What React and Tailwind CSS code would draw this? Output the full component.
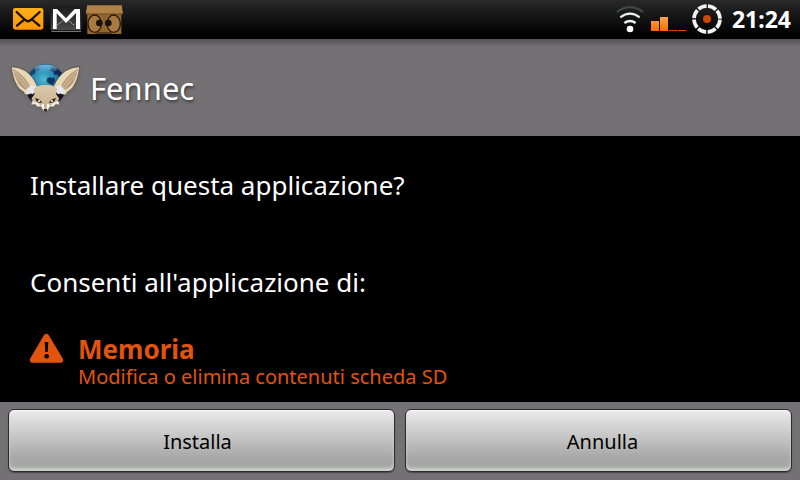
import React from 'react';

function MailIcon() {
    return (
        <svg viewBox="36 21 96 72" className="w-8 h-6" aria-hidden="true">
            <defs>
                <linearGradient id="mail" x1="0" y1="0" x2="0" y2="1">
                    <stop offset="0" stopColor="#ffae1c" />
                    <stop offset="1" stopColor="#ff9600" />
                </linearGradient>
            </defs>
            <rect x="39" y="24" width="91" height="65" rx="7" fill="url(#mail)" />
            <path d="M50 36L74 59Q84 68 94 59L119 36M51 77L69 62M118 77L100 62" fill="none" stroke="#1a1206" strokeWidth="7" strokeLinecap="round" />
        </svg>
    );
}

function GmailIcon() {
    return (
        <svg viewBox="150 18 96 84" className="w-8 h-7" aria-hidden="true">
            <defs>
                <linearGradient id="gmail" x1="0" y1="0" x2="0" y2="1">
                    <stop offset="0" stopColor="#1c1c1c" />
                    <stop offset="1" stopColor="#4a4a4a" />
                </linearGradient>
            </defs>
            <rect x="152" y="25" width="92" height="68" rx="3" fill="url(#gmail)" />
            <path d="M172 78L188 66M222 78L207 66" stroke="#c8c8c8" strokeWidth="3" strokeDasharray="5 3" />
            <path d="M154 97H243" stroke="#8a8a8a" strokeWidth="3" />
            <path d="M159 90V30H171L198 58L224 30H240V90H228V42L198 72L170 43V90Z" fill="#fff" />
        </svg>
    );
}

function BoxIcon() {
    return (
        <svg viewBox="258 9 114 96" className="w-[38px] h-8" aria-hidden="true">
            <rect x="262" y="34" width="102" height="68" fill="#94672f" />
            <path d="M262 15H365L369 41H257Z" fill="#b08248" />
            <path d="M262 15H365V18H262Z" fill="#8f6838" />
            <path d="M259 42H367" stroke="#6d4924" strokeWidth="3" />
            <path d="M313 42V101" stroke="#805a2d" strokeWidth="2" />
            <ellipse cx="284" cy="71" rx="20" ry="26" fill="#a87a40" stroke="#22170b" strokeWidth="4" />
            <ellipse cx="341" cy="71" rx="20" ry="26" fill="#a87a40" stroke="#22170b" strokeWidth="4" />
            <circle cx="298" cy="69" r="10" fill="#17100a" />
            <circle cx="325" cy="69" r="10" fill="#17100a" />
            <path d="M290 99H336" stroke="#3d2915" strokeWidth="4" />
        </svg>
    );
}

function WifiIcon() {
    return (
        <svg viewBox="51 15 84 84" className="w-7 h-7" fill="none" aria-hidden="true">
            <path d="M54 36Q93 7 132 36" stroke="#414644" strokeWidth="7" />
            <path d="M64 52Q93 30 122 52" stroke="#eef2f2" strokeWidth="7" />
            <path d="M76 69Q93 57 110 69" stroke="#eef2f2" strokeWidth="7" />
            <circle cx="93" cy="87" r="10" fill="#fff" />
        </svg>
    );
}

function SignalIcon() {
    return (
        <svg viewBox="150 15 108 84" className="w-9 h-7" aria-hidden="true">
            <defs>
                <linearGradient id="bars" gradientUnits="userSpaceOnUse" x1="0" y1="51" x2="0" y2="93">
                    <stop offset="0" stopColor="#ffa54c" />
                    <stop offset="1" stopColor="#ff6a00" />
                </linearGradient>
            </defs>
            <rect x="153" y="63" width="24" height="30" fill="url(#bars)" />
            <rect x="180" y="51" width="24" height="42" fill="url(#bars)" />
            <rect x="207" y="90" width="24" height="3" fill="#e84800" />
            <rect x="234" y="90" width="24" height="3" fill="#e84800" />
        </svg>
    );
}

function BatteryIcon() {
    return (
        <svg viewBox="276 12 90 90" className="w-[30px] h-[30px]" aria-hidden="true">
            <circle cx="321" cy="57" r="39" fill="none" stroke="#f2f2f2" strokeWidth="11" pathLength="80" strokeDasharray="8.6 1.4" strokeDashoffset="-0.7" />
            <circle cx="321" cy="57" r="12" fill="#cc4800" />
        </svg>
    );
}

function Ear() {
    return (
        <g>
            <path d="M34 53Q58 54 76 65Q100 82 112 112L104 130L80 138Q70 136 72 130Q54 120 49 106Q38 88 34 53Z" fill="#e8d8b8" stroke="#4b4338" strokeWidth="2" />
            <path d="M39 59Q64 72 84 100L92 114L76 122Q58 112 51 96Q43 82 39 59Z" fill="#b89c7a" />
            <path d="M42 66Q66 84 84 112M46 80Q62 94 78 116M56 68Q76 84 92 110" fill="none" stroke="#dccaa8" strokeWidth="3" />
            <path d="M108 114Q94 106 86 110L90 114L79 117L86 121L75 127L84 129L79 136L92 133L98 136L106 128Z" fill="#e6e6ee" />
        </g>
    );
}

function FennecLogo() {
    return (
        <svg viewBox="30 36 210 159" className="w-[70px] h-[53px] drop-shadow-sm" aria-hidden="true">
            <defs>
                <radialGradient id="globe" cx="0.45" cy="0.4" r="0.6">
                    <stop offset="0" stopColor="#4fb9d2" />
                    <stop offset="0.5" stopColor="#2584ac" />
                    <stop offset="1" stopColor="#0b3358" />
                </radialGradient>
                <linearGradient id="shine" x1="0" y1="0" x2="0" y2="1">
                    <stop offset="0" stopColor="#8fc8ee" stopOpacity="0.8" />
                    <stop offset="1" stopColor="#8fc8ee" stopOpacity="0" />
                </linearGradient>
                <linearGradient id="face" x1="0" y1="0" x2="0" y2="1">
                    <stop offset="0" stopColor="#dcc9aa" />
                    <stop offset="1" stopColor="#c4ac8c" />
                </linearGradient>
            </defs>
            <circle cx="137" cy="102" r="57" fill="url(#globe)" />
            <path d="M158 50L184 70L192 90L178 86L172 76L164 78L160 68L150 66Z" fill="#15285a" />
            <path d="M88 72L104 57L122 52L116 66L108 64L104 74L92 80Z" fill="#17446c" />
            <path d="M142 88L150 84L156 88L162 84L166 96L158 108L148 104L140 98Z" fill="#0e3560" />
            <ellipse cx="137" cy="60" rx="34" ry="13" fill="url(#shine)" />
            <path d="M78 126L106 120H168L196 126Q192 146 174 160L100 160Q82 148 78 126Z" fill="#14151c" />
            <Ear />
            <g transform="translate(273 0) scale(-1 1)">
                <Ear />
            </g>
            <path d="M137 108Q116 106 100 120Q106 132 102 138Q98 142 94 150L98 154L93 167L105 166L112 174L122 173L130 185L136 189L142 185L150 173L160 174L167 166L179 167L174 154L178 150Q174 142 170 138Q166 132 172 120Q158 106 137 108Z" fill="url(#face)" />
            <path d="M98 156L96 166L106 164L113 172L121 170L116 163L108 160Z" fill="#eee9e4" />
            <path d="M175 156L177 166L167 164L160 172L152 170L157 163L165 160Z" fill="#eee9e4" />
            <path d="M105 147L117 151L127 161L116 161L109 156Z" fill="#302820" />
            <path d="M168 147L156 151L146 161L157 161L164 156Z" fill="#302820" />
            <circle cx="117" cy="156" r="3" fill="#fff" />
            <circle cx="156" cy="156" r="3" fill="#fff" />
            <path d="M123 168L131 164L133 180L130 183ZM150 168L142 164L140 180L143 183Z" fill="#fff" />
            <path d="M131 180H142L139 188H134Z" fill="#2c1d1d" />
        </svg>
    );
}

function WarningIcon() {
    return (
        <svg viewBox="30 39 108 96" className="w-9 h-8 shrink-0" aria-hidden="true">
            <path d="M79 50L121 120H38Z" fill="#e2540e" stroke="#e2540e" strokeWidth="17" strokeLinejoin="round" />
            <path d="M74 66H85L83 96H76Z" fill="#000" />
            <circle cx="80" cy="109" r="7" fill="#000" />
        </svg>
    );
}

function DialogButton({ className, children }) {
    return (
        <button
            type="button"
            className={`${className} flex-1 h-[63px] pt-0.5 rounded-md border border-[#2c2c2c] bg-linear-to-b from-[#ececec] via-[#bcbcbc] via-55% to-[#a6a6a6] to-80% shadow-[inset_0_-3px_3px_#cdd0cd,inset_0_1px_1px_#f8f8f8,0_1px_1px_#4a4a4a] text-xl text-black`}
        >
            {children}
        </button>
    );
}

export default function App() {
    return (
        <div className="min-h-screen flex flex-col bg-black text-white font-['Noto_Sans',sans-serif]">
            <header className="h-[39px] flex items-center justify-between pl-3 pr-[9px] border-b border-black bg-linear-to-b from-[#292929] to-[#020202]">
                <div className="flex items-center gap-1">
                    <MailIcon />
                    <div className="flex items-center gap-1 pl-0.5">
                        <GmailIcon />
                        <BoxIcon />
                    </div>
                </div>
                <div className="flex items-center gap-1.5">
                    <WifiIcon />
                    <SignalIcon />
                    <BatteryIcon />
                    <time className="pl-1 text-[23px] leading-8 font-bold">21:24</time>
                </div>
            </header>

            <div className="flex items-center gap-2.5 h-[97px] px-2.5 bg-linear-to-b from-[#525052] to-[#737173] to-8%">
                <FennecLogo />
                <h1 className="text-[31px] leading-10 text-shadow-[1px_2px_3px_#00000080]">Fennec</h1>
            </div>

            <main className="flex-1 px-[30px] pt-[31px]">
                <p className="text-[26px] leading-9">Installare questa applicazione?</p>
                <h2 className="mt-[61px] text-[26px] leading-9">Consenti all'applicazione di:</h2>
                <div className="flex gap-3 mt-[33px] text-[#e2540e]">
                    <WarningIcon />
                    <div>
                        <h3 className="text-[26px] leading-8 font-bold">Memoria</h3>
                        <p className="text-xl leading-6">Modifica o elimina contenuti scheda SD</p>
                    </div>
                </div>
            </main>

            <footer className="flex gap-2.5 px-2 pt-[7px] pb-2 bg-[#737173]">
                <DialogButton className="pr-2">Installa</DialogButton>
                <DialogButton className="pl-2">Annulla</DialogButton>
            </footer>
        </div>
    );
}
